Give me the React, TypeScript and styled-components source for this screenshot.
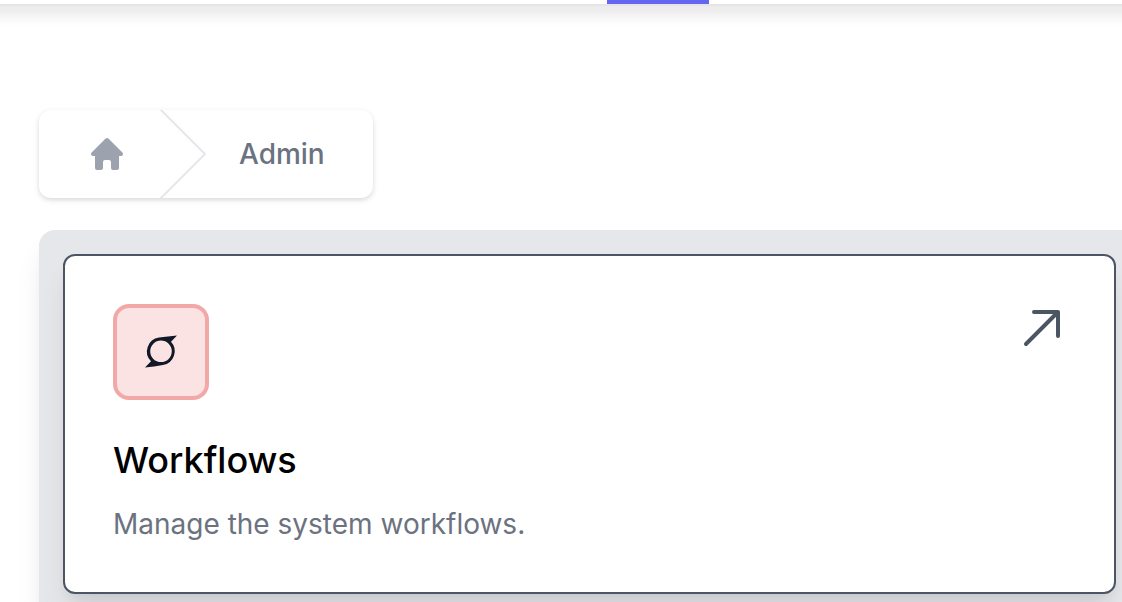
import React from "react";
import styled, { createGlobalStyle } from "styled-components";

const GlobalStyle = createGlobalStyle`
  *, *::before, *::after { box-sizing: border-box; }
  html, body { margin: 0; background: #fff; }
  body { font-family: Inter, "Liberation Sans", sans-serif; color: #000; }
  h2, p, ol { margin: 0; padding: 0; }
  a { color: inherit; text-decoration: none; }
`;

const Page = styled.div`
  overflow: hidden;
`;

const TopBar = styled.header`
  height: 6px;
  margin: 0 -24px;
  padding-left: 631px;
  border-bottom: 2px solid #e5e5e7;
  box-shadow: 0 4px 16px rgba(0, 0, 0, 0.26);
`;

const ActiveTab = styled.div`
  width: 102px;
  height: 4px;
  background: #6366f1;
`;

const Main = styled.main`
  display: flex;
  flex-direction: column;
  gap: 32px;
  padding: 104px 0 0 39px;
`;

const Breadcrumb = styled.nav`
  display: flex;
`;

const Trail = styled.ol`
  display: flex;
  align-items: center;
  gap: 32px;
  height: 88px;
  && { padding: 0 48px; }
  list-style: none;
  background: #fff;
  border-radius: 12px;
  box-shadow: 0 2px 6px rgba(0, 0, 0, 0.1), 0 2px 4px rgba(0, 0, 0, 0.06);
`;

const Crumb = styled.li`
  display: flex;
  align-items: center;
  gap: 32px;
  font-size: 28px;
  line-height: 40px;
  font-weight: 500;
  color: #6b7280;
`;

const HomeLink = styled.a`
  display: flex;
`;

const Panel = styled.section`
  padding: 24px 6px 24px 24px;
  background: #e5e7eb;
  border-radius: 16px 0 0 16px;
  box-shadow: 0 20px 30px -6px rgba(0, 0, 0, 0.1), 0 8px 12px -4px rgba(0, 0, 0, 0.05);
`;

const Card = styled.a`
  display: flex;
  justify-content: space-between;
  align-items: flex-start;
  padding: 48px;
  background: #fff;
  border: 2px solid #4b5563;
  border-radius: 12px;
  box-shadow: 0 20px 30px -6px rgba(0, 0, 0, 0.1), 0 8px 12px -4px rgba(0, 0, 0, 0.05);
`;

const IconTile = styled.div`
  display: flex;
  align-items: center;
  justify-content: center;
  width: 96px;
  height: 96px;
  background: #fbe3e3;
  border: 4px solid #f2a8a7;
  border-radius: 16px;
`;

const Title = styled.h2`
  && { margin-top: 32px; }
  font-size: 36px;
  line-height: 56px;
  font-weight: 500;
`;

const Description = styled.p`
  && { margin-top: 16px; }
  font-size: 28px;
  line-height: 40px;
  color: #6b7280;
`;

const HomeIcon = () => (
  <svg width="40" height="40" viewBox="0 0 20 20" fill="#9ca3af" aria-hidden="true">
    <path d="M10.707 2.293a1 1 0 00-1.414 0l-7 7A1 1 0 003 11h1v6a1 1 0 001 1h2a1 1 0 001-1v-3a1 1 0 011-1h2a1 1 0 011 1v3a1 1 0 001 1h2a1 1 0 001-1v-6h1a1 1 0 00.707-1.707l-7-7z" />
  </svg>
);

const Separator = () => (
  <svg width="48" height="88" viewBox="0 0 24 44" fill="#e5e7eb" preserveAspectRatio="none" aria-hidden="true">
    <path d="M.293 0l22 22-22 22h1.414l22-22-22-22H.293z" />
  </svg>
);

const WorkflowIcon = () => (
  <svg width="36" height="36" viewBox="0 0 36 36" aria-hidden="true">
    <path
      fill="#111827"
      fillRule="evenodd"
      d="M34 1.500L28 7.700A14 14 0 0 1 20 31C14 32.200 8 32.700 2 33.500L8 27.200A14 14 0 0 1 16 3.500C22 3 28 2.300 34 1.500ZM18 6.500A10.800 10.800 0 1 0 18 28.100A10.800 10.800 0 1 0 18 6.500Z"
    />
  </svg>
);

const ArrowIcon = () => (
  <svg width="48" height="48" viewBox="0 0 48 48" fill="none" stroke="#4b5563" strokeWidth="4" strokeLinecap="round" strokeLinejoin="round" aria-hidden="true">
    <path d="M8 40L40 8M16 8H40V32" />
  </svg>
);

export default function App() {
  return (
    <Page>
      <GlobalStyle />
      <TopBar>
        <ActiveTab />
      </TopBar>
      <Main>
        <Breadcrumb aria-label="Breadcrumb">
          <Trail>
            <Crumb>
              <HomeLink href="#home" aria-label="Home">
                <HomeIcon />
              </HomeLink>
            </Crumb>
            <Crumb>
              <Separator />
              <a href="#admin">Admin</a>
            </Crumb>
          </Trail>
        </Breadcrumb>
        <Panel>
          <Card href="#workflows">
            <div>
              <IconTile>
                <WorkflowIcon />
              </IconTile>
              <Title>Workflows</Title>
              <Description>Manage the system workflows.</Description>
            </div>
            <ArrowIcon />
          </Card>
        </Panel>
      </Main>
    </Page>
  );
}
